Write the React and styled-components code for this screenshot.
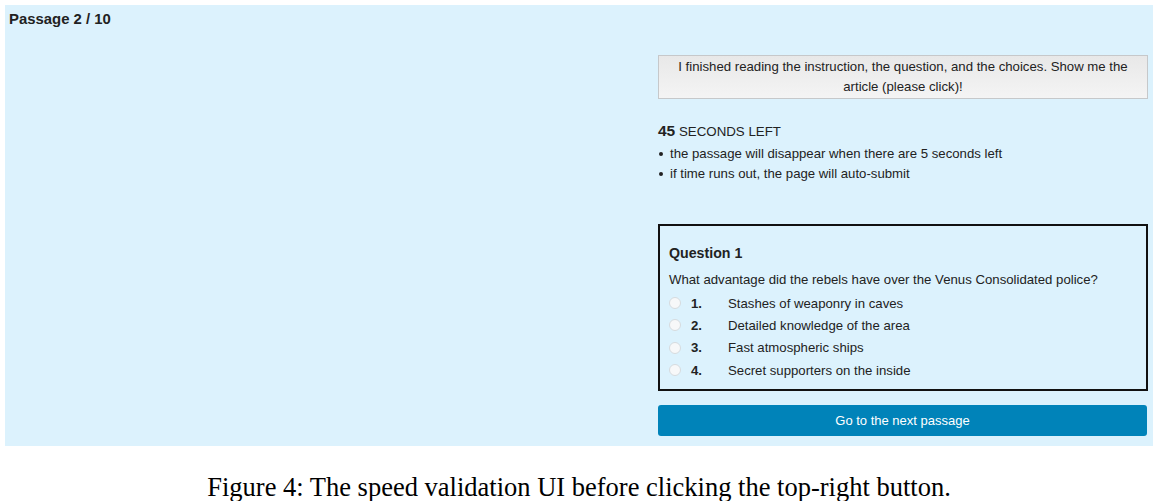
import React from "react";
import styled, { createGlobalStyle } from "styled-components";

const Global = createGlobalStyle`
  html, body { margin: 0; padding: 0; background: #ffffff; }
  body { font-family: "Liberation Sans", Arial, Helvetica, sans-serif; color: #222; }
  * { box-sizing: border-box; }
`;

const Page = styled.div`
  width: 1157px;
  padding: 5px 4px 0 5px;
`;

const Panel = styled.section`
  background: #dcf2fd;
  height: 441px;
  padding: 5px 5px 10px 4px;
  display: flex;
  flex-direction: column;
`;

const Header = styled.div`
  font-size: 14.9px;
  font-weight: bold;
  line-height: 18px;
  color: #222;
`;

const Body = styled.div`
  display: flex;
  justify-content: flex-end;
  flex: 1;
`;

const Column = styled.div`
  width: 490px;
  margin-top: 27px;
  display: flex;
  flex-direction: column;
`;

const RevealButton = styled.button`
  font-family: inherit;
  width: 100%;
  height: 44px;
  border: 1px solid #c6c8ca;
  background: linear-gradient(#e8e8e8, #f4f4f4);
  color: #222;
  font-size: 13.2px;
  line-height: 20px;
  padding: 1px 18px;
  text-align: center;
`;

const Timer = styled.div`
  margin-top: 23px;
  font-size: 13.3px;
  line-height: 18px;
  color: #222;
`;

const Seconds = styled.b`
  font-size: 15.5px;
`;

const Notes = styled.ul`
  list-style: none;
  margin: 3px 0 0;
  padding: 0;
`;

const Note = styled.li`
  font-size: 13.2px;
  line-height: 20px;
  padding-left: 12px;
  position: relative;
  &::before {
    content: "";
    position: absolute;
    left: 1px;
    top: 8px;
    width: 4px;
    height: 4px;
    border-radius: 50%;
    background: #222;
  }
`;

const QuestionBox = styled.div`
  margin-top: 40px;
  height: 167px;
  border: 2px solid #111;
  padding: 18px 9px 0 9px;
`;

const QTitle = styled.div`
  font-size: 14.2px;
  font-weight: bold;
  line-height: 18px;
`;

const QText = styled.div`
  margin-top: 9px;
  font-size: 13.2px;
  line-height: 18px;
`;

const Options = styled.div`
  margin-top: 3px;
  display: flex;
  flex-direction: column;
`;

const Option = styled.label`
  display: flex;
  align-items: center;
  height: 22.3px;
  font-size: 13.2px;
`;

const Radio = styled.span`
  width: 12px;
  height: 12px;
  border-radius: 50%;
  background: #f7f8f9;
  border: 1px solid #d6dbdf;
  margin-right: 10px;
  flex: none;
`;

const Num = styled.span`
  font-weight: bold;
  width: 37px;
  flex: none;
`;

const NextButton = styled.button`
  font-family: inherit;
  margin-top: 14px;
  width: 489px;
  height: 31px;
  border: none;
  border-radius: 3px;
  background: #0083b9;
  color: #ffffff;
  font-size: 13px;
`;

const Caption = styled.p`
  margin: 26px 0 0;
  text-align: center;
  font-family: "Liberation Serif", "Times New Roman", serif;
  font-size: 26.5px;
  line-height: 30px;
  color: #000;
`;

const options = [
  "Stashes of weaponry in caves",
  "Detailed knowledge of the area",
  "Fast atmospheric ships",
  "Secret supporters on the inside",
];

export default function App() {
  return (
    <>
      <Global />
      <Page>
        <Panel>
          <Header>Passage 2 / 10</Header>
          <Body>
            <Column>
              <RevealButton>
                I finished reading the instruction, the question, and the choices. Show me the article (please click)!
              </RevealButton>
              <Timer>
                <Seconds>45</Seconds> SECONDS LEFT
              </Timer>
              <Notes>
                <Note>the passage will disappear when there are 5 seconds left</Note>
                <Note>if time runs out, the page will auto-submit</Note>
              </Notes>
              <QuestionBox>
                <QTitle>Question 1</QTitle>
                <QText>What advantage did the rebels have over the Venus Consolidated police?</QText>
                <Options>
                  {options.map((o, i) => (
                    <Option key={o}>
                      <Radio />
                      <Num>{i + 1}.</Num>
                      {o}
                    </Option>
                  ))}
                </Options>
              </QuestionBox>
              <NextButton>Go to the next passage</NextButton>
            </Column>
          </Body>
        </Panel>
        <Caption>Figure 4: The speed validation UI before clicking the top-right button.</Caption>
      </Page>
    </>
  );
}
